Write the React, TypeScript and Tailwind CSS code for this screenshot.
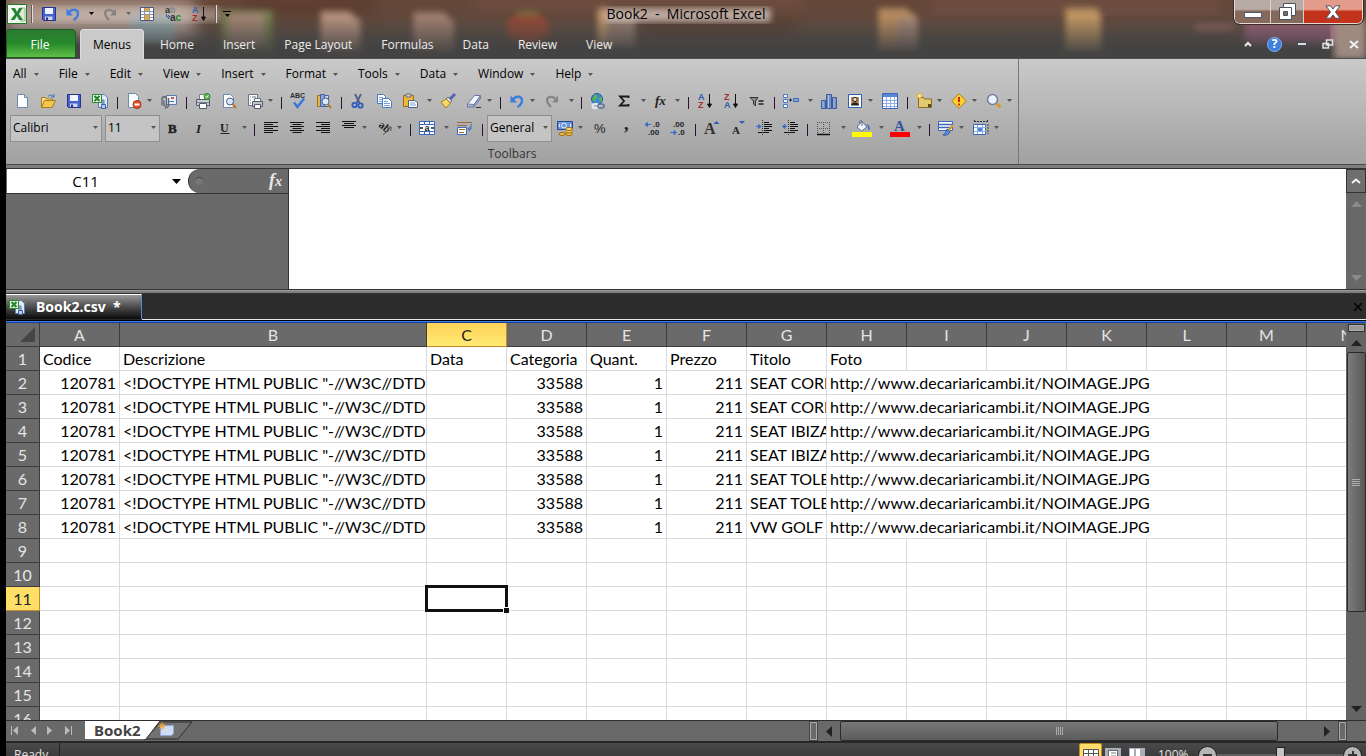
import type { ReactNode } from "react";

const paper = "#fdfeff";

const icons: Record<string, ReactNode> = {
  New: (
    <>
      <path d="M3.500 1.500h7l3 3v10h-10z" fill={paper} stroke="#6f86ad" />
      <path d="M10.500 1.500v3h3" fill="#cfdcf0" stroke="#6f86ad" />
    </>
  ),
  Open: (
    <>
      <path d="M1.500 14V4.500h4l1 1.500h6V8" fill="#fbe089" stroke="#a67c1c" />
      <path d="M1.500 14.500 4.500 7.500h11l-3.500 7z" fill="#f5c64c" stroke="#a67c1c" />
      <path d="M8 3.500c2-2 4-2 6 .5m0-3v3h-3" fill="none" stroke="#3b6fb8" />
    </>
  ),
  Save: (
    <>
      <path d="M1.500 1.500h13v13h-12l-1-1z" fill="#4560cf" stroke="#27358f" />
      <path d="M4 2h8v6H4z" fill="#f1f4ff" />
      <path d="M4 10.500h7.500V14H4z" fill="#cdd4ea" />
      <path d="M5 11.500h2V14H5z" fill="#27358f" />
    </>
  ),
  "Excel document": (
    <>
      <path d="M6.500 1.500h6l3 3v10h-9z" fill="#dfe9f8" stroke="#5b7ab0" />
      <path d="M9 8h4M9 10h4M11 6v6" stroke="#5b7ab0" />
      <path d="M.5 1.500h9v8h-9z" fill="#e7f5e2" stroke="#2f8a35" />
      <path d="m2.500 3 5 5m0-5-5 5" stroke="#23812c" strokeWidth="2" />
      <path d="M9.500 11.500h4v4h-4z" fill="#b5c9ea" stroke="#41609b" />
    </>
  ),
  Permission: (
    <>
      <path d="M2.500.5h7l3 3v11h-10z" fill={paper} stroke="#6f86ad" />
      <circle cx="11" cy="11.500" r="4" fill="#e2532b" stroke="#b0310f" />
      <path d="M8.500 11.500h5" stroke="#fff" strokeWidth="2" />
    </>
  ),
  Mail: (
    <>
      <path d="M5.500 2.500h10v9h-10z" fill="#e6eefb" stroke="#5b7ab0" />
      <path d="M10 5h3" stroke="#d8572d" strokeWidth="2" />
      <path d="M8 8.500h5" stroke="#5b7ab0" />
      <path d="M1 12.500V6a2 2 0 0 1 4.500 0v6.500a1.500 1.500 0 0 1-2.500 0V7.500M7.500 5v8q-1 2-3.500 2" fill="none" stroke="#5b6373" strokeWidth="1.300" />
    </>
  ),
  Print: (
    <>
      <path d="M4.500 1.500h7v5h-7z" fill={paper} stroke="#7a7f8c" />
      <path d="M1.500 6.500h13v6h-13z" fill="#c9cdd6" stroke="#555c6b" />
      <path d="M4.500 10.500h7v5h-7z" fill={paper} stroke="#555c6b" />
      <path d="M2 9.500h12" stroke="#787f8d" />
      <circle cx="12" cy="3.500" r="3" fill="#6cba59" stroke="#2c842c" />
      <path d="m10.500 3.500 1 1 2-2" fill="none" stroke="#fff" />
    </>
  ),
  Preview: (
    <>
      <path d="M2.500 1.500h7l3 3v10h-10z" fill={paper} stroke="#6f86ad" />
      <circle cx="9" cy="8.500" r="3.500" fill="#d4e6f7" stroke="#4b6285" />
      <path d="m11.500 11 3.500 4" stroke="#b87a2b" strokeWidth="2" />
    </>
  ),
  "Quick print": (
    <>
      <path d="M1.500 1.500h9v11h-9z" fill={paper} stroke="#6a7182" />
      <path d="M3 4h1M3 7h1M3 10h1M5 4h4" stroke="#6a7182" />
      <path d="M7.500 5.500h6v4h-6z" fill={paper} stroke="#6a7182" />
      <path d="M5.500 8.500h10v5h-10z" fill="#bfc4cf" stroke="#555c6b" />
      <path d="M7.500 11.500h6v4h-6z" fill={paper} stroke="#555c6b" />
    </>
  ),
  Spelling: (
    <>
      <text x="0" y="5" fontSize="7" fontFamily="Liberation Sans" fontWeight="700" fill="#2b2f3a">ABC</text>
      <path d="m4 9.500 3.500 4.500L14 5.500" fill="none" stroke="#3c78dc" strokeWidth="2.500" />
    </>
  ),
  Research: (
    <>
      <path d="M1.500 2.500h3v11h-3z" fill="#e3b449" stroke="#9a7320" />
      <path d="M4.500 1.500h4v12h-4z" fill="#8aa3d8" stroke="#45619f" />
      <path d="M8.500 2.500h4v11h-4z" fill="#c4d1ef" stroke="#45619f" />
      <circle cx="9.500" cy="8.500" r="3.500" fill="#dcebf9" stroke="#4b6285" />
      <path d="m12 11 3 4" stroke="#b87a2b" strokeWidth="2" />
    </>
  ),
  Cut: (
    <>
      <path d="M5 1 9.500 10M11 1 6.500 10" stroke="#4d5f82" strokeWidth="1.800" />
      <circle cx="4.500" cy="12" r="2.200" fill="none" stroke="#2c5bc0" strokeWidth="1.800" />
      <circle cx="10.500" cy="12.500" r="2.200" fill="none" stroke="#2c5bc0" strokeWidth="1.800" />
    </>
  ),
  Copy: (
    <>
      <path d="M1.500 1.500h6l2 2v7h-8z" fill={paper} stroke="#4a78c4" />
      <path d="M3 4.500h4M3 6.500h4M3 8.500h3" stroke="#7c9edb" />
      <path d="M6.500 5.500h6l3 3v6h-9z" fill={paper} stroke="#4a78c4" />
      <path d="M8 8.500h4M8 10.500h6M8 12.500h6" stroke="#7c9edb" />
    </>
  ),
  Paste: (
    <>
      <path d="M1.500 2.500h10v11h-10z" fill="#f0b738" stroke="#9b6b14" />
      <path d="M4 1h5v3H4z" fill="#c9cdd6" stroke="#6a6f7b" />
      <path d="M6.500 7.500h6l3 2v5h-9z" fill={paper} stroke="#4b6285" />
      <path d="M8 10h5M8 12h6" stroke="#7c9edb" />
    </>
  ),
  "Format painter": (
    <>
      <path d="m15 1-5 5" stroke="#5563b0" strokeWidth="3" />
      <path d="m8 4 4 4-2 2-4-4z" fill="#d5d9e4" stroke="#6a6f7b" />
      <path d="m6 6 4.500 4L6 15 1 9z" fill="#f7d765" stroke="#a97f1b" />
    </>
  ),
  Eraser: (
    <>
      <path d="m1.500 11 7-8.500h6l-6.500 9z" fill="#f4f7fd" stroke="#6478a3" />
      <path d="M1.500 11v3h6.500v-2.500L14.500 3v2.500L8 14" fill="#a7b7d9" stroke="#6478a3" />
      <path d="M10 14.500h5" stroke="#333" />
    </>
  ),
  Undo: (
    <>
      <path d="M4 6.500C7 2.500 13 3 13 7.500c0 3-2 5-4.500 6.500" fill="none" stroke="#3f7ce0" strokeWidth="2.400" />
      <path d="M1.500 2.500v7h6.500z" fill="#3f7ce0" />
    </>
  ),
  Redo: (
    <>
      <path d="M12 6.500C9 2.500 3 3 3 7.500c0 3 2 4 4 6.500" fill="none" stroke="#858585" strokeWidth="2.200" />
      <path d="M14 2.500v7H8z" fill="#858585" />
    </>
  ),
  Hyperlink: (
    <>
      <circle cx="7" cy="6" r="5.500" fill="#3f87dc" stroke="#24589d" />
      <path d="M4 2c3-1 4 1 3 3S4 7 5 9L2 7zM9 5l3-1v4l-2 1z" fill="#4fb848" />
      <rect x="2.500" y="11" width="6" height="4" rx="2" fill="none" stroke="#e3e9f3" strokeWidth="2" />
      <rect x="8" y="11" width="6" height="4" rx="2" fill="none" stroke="#5c7192" strokeWidth="1.500" />
    </>
  ),
  Sum: <path d="M12.500 5V3.500H4l4 4.500-4 4.500h8.500V11" fill="none" stroke="#1b1b1b" strokeWidth="1.800" />,
  Function: <text x="1" y="12" fontSize="13" fontStyle="italic" fontWeight="700" fontFamily="Liberation Serif" fill="#222">fx</text>,
  "Sort ascending": (
    <>
      <text x="1" y="7" fontSize="9" fontWeight="700" fontFamily="Liberation Sans" fill="#2d5cae">A</text>
      <text x="1" y="15" fontSize="9" fontWeight="700" fontFamily="Liberation Sans" fill="#a92e2e">Z</text>
      <path d="M12.500 1v12M10.500 11l2 3.500 2-3.500z" stroke="#111" fill="#111" />
    </>
  ),
  "Sort descending": (
    <>
      <text x="1" y="7" fontSize="9" fontWeight="700" fontFamily="Liberation Sans" fill="#a92e2e">Z</text>
      <text x="1" y="15" fontSize="9" fontWeight="700" fontFamily="Liberation Sans" fill="#2d5cae">A</text>
      <path d="M12.500 1v12M10.500 11l2 3.500 2-3.500z" stroke="#111" fill="#111" />
    </>
  ),
  Filter: (
    <>
      <path d="M1 4.500h8L6.500 8v5L4.500 11V8z" fill="#888" stroke="#333" />
      <path d="M9.500 8h5M9.500 11h5" stroke="#222" strokeWidth="1.600" />
    </>
  ),
  Outline: (
    <>
      <path d="M.5 1.500h4v3h-4zM.5 6.500h4v3h-4zM.5 11.500h4v3h-4z" fill="#f2f6fe" stroke="#4a78c4" />
      <path d="M10.500 5.500h5v3h-5z" fill="#84a8e6" stroke="#3a64b1" />
      <path d="M6 7h3M7.500 5.500v3" stroke="#222" />
    </>
  ),
  Chart: (
    <>
      <path d="M.5 7.500h4v8h-4zM5.500 1.500h5v14h-5zM11.500 4.500h4v11h-4z" fill="#7390c6" stroke="#3c5b97" />
      <path d="M2 8v7M7.500 2v13M13 5v10" stroke="#a9bfe6" />
    </>
  ),
  Picture: (
    <>
      <path d="M1.500 1.500h13v13h-13z" fill={paper} stroke="#2b5fb4" />
      <path d="M4 4h8v8H4z" fill="#b98c58" />
      <circle cx="8" cy="6.500" r="2.200" fill="#f3d3b3" stroke="#222" />
      <path d="M4 12.500c0-4 8-4 8 0z" fill="#222" />
    </>
  ),
  Table: (
    <>
      <path d="M.5.5h15v15H.5z" fill={paper} stroke="#3a67bd" />
      <path d="M1 1h14v3H1z" fill="#5a86d8" />
      <path d="M1 7.500h14M1 10.500h14M1 13.500h14M4.500 4v11M8.500 4v11M12.500 4v11" stroke="#92aede" />
    </>
  ),
  "New folder": (
    <>
      <path d="M2.500 4.500h5l1 1.500h7v8.500h-13z" fill="#e2c972" stroke="#8b6d1e" />
      <path d="M12 11h3v3h-3z" fill="#5d4a1a" />
      <path d="M3.500-1v8M-.5 3h8M.5 0l6 6m0-6-6 6" stroke="#f9b324" />
      <circle cx="3.500" cy="3" r="1.500" fill="#fff6bd" />
    </>
  ),
  Warning: (
    <>
      <path d="M8 .7 15.300 8 8 15.300.7 8z" fill="#fcd32f" stroke="#b77a12" />
      <path d="M8 4v5M8 10.500v2" stroke="#d0271b" strokeWidth="2" />
    </>
  ),
  Zoom: (
    <>
      <circle cx="6.500" cy="6.500" r="5" fill="#eaf3fc" stroke="#6e7f9b" strokeWidth="1.500" />
      <path d="m10.500 10.500 4 4" stroke="#d49b32" strokeWidth="3" />
    </>
  ),
  Bold: <text x="3" y="12.500" fontSize="13" fontWeight="700" fontFamily="Liberation Serif" fill="#222" stroke="#222" strokeWidth=".5">B</text>,
  Italic: <text x="5" y="12.500" fontSize="13" fontStyle="italic" fontWeight="700" fontFamily="Liberation Serif" fill="#222">I</text>,
  Underline: (
    <>
      <text x="3" y="11.500" fontSize="12" fontWeight="700" fontFamily="Liberation Serif" fill="#222">U</text>
      <path d="M3.500 13.500h9" stroke="#222" />
    </>
  ),
  "Align left": <path d="M1 2.500h14M1 4.500h9M1 6.500h14M1 8.500h9M1 10.500h14M1 12.500h9" stroke="#111" />,
  "Align center": <path d="M1 2.500h14M3.500 4.500h9M1 6.500h14M3.500 8.500h9M1 10.500h14M3.500 12.500h9" stroke="#111" />,
  "Align right": <path d="M1 2.500h14M6 4.500h9M1 6.500h14M6 8.500h9M1 10.500h14M6 12.500h9" stroke="#111" />,
  "Align top": <path d="M1 1.500h14M3 3.500h10M1 5.500h14M3 7.500h10" stroke="#111" />,
  Orientation: (
    <>
      <text x="2" y="6" fontSize="11" fontWeight="700" fontFamily="Liberation Serif" transform="rotate(40 2 6)" fill="#222">ab</text>
      <path d="m7 15 8-8m0 4V7h-4" fill="none" stroke="#555" />
    </>
  ),
  Merge: (
    <>
      <path d="M.5 1.500h15v13H.5z" fill={paper} stroke="#3a67bd" />
      <path d="M5.500 1.500v3m5-3v3m-5 7v3m5-3v3M.5 4.500h15M.5 11.500h15" stroke="#3a67bd" />
      <text x="5.500" y="10.500" fontSize="9" fontWeight="700" fontFamily="Liberation Sans" fill="#222">a</text>
      <path d="M1 8h3M12 8h3" stroke="#222" strokeWidth="1.500" />
    </>
  ),
  Wrap: (
    <>
      <path d="M0 2.500h15M0 5.500h10" stroke="#9b6a3c" />
      <path d="M14 4v5h-3m2-2-2 2 2 2" fill="none" stroke="#3a67bd" />
      <path d="M.5 7.500h9v7h-9z" fill={paper} stroke="#3a67bd" />
      <path d="M2 9.500h6M2 12.500h5" stroke="#9b6a3c" />
    </>
  ),
  Currency: (
    <>
      <path d="M.5 1.500h15v8H.5z" fill="#6a93dc" stroke="#23498f" />
      <circle cx="7" cy="5.500" r="2.500" fill="none" stroke="#e8effc" />
      <path d="M2.500 4v3M13.500 4v3" stroke="#e8effc" />
      <ellipse cx="12" cy="14" rx="3.500" ry="1.500" fill="#f5c742" stroke="#9a6d15" />
      <ellipse cx="12" cy="11.500" rx="3.500" ry="1.500" fill="#f5c742" stroke="#9a6d15" />
      <ellipse cx="12" cy="9" rx="3.500" ry="1.500" fill="#f9dc79" stroke="#9a6d15" />
      <ellipse cx="5" cy="14" rx="3" ry="1.500" fill="#f5c742" stroke="#9a6d15" />
    </>
  ),
  Percent: <text x="2" y="13" fontSize="13" fontFamily="Liberation Sans" fill="#222">%</text>,
  Comma: <text x="6" y="10" fontSize="18" fontWeight="700" fontFamily="Liberation Serif" fill="#222">,</text>,
  "Increase decimal": (
    <>
      <path d="M1 4.500 3.500 2.500v4zM2 4.500h5" fill="#3a6bd0" stroke="#3a6bd0" />
      <text x="9" y="7" fontSize="8" fontWeight="700" fontFamily="Liberation Sans" fill="#222">.0</text>
      <text x="4" y="15" fontSize="8" fontWeight="700" fontFamily="Liberation Sans" fill="#222">.00</text>
    </>
  ),
  "Decrease decimal": (
    <>
      <text x="3" y="7" fontSize="8" fontWeight="700" fontFamily="Liberation Sans" fill="#222">.00</text>
      <text x="8" y="15" fontSize="8" fontWeight="700" fontFamily="Liberation Sans" fill="#222">.0</text>
      <path d="M6.500 12.500 4 10.500v4zM0 12.500h5" fill="#3a6bd0" stroke="#3a6bd0" />
    </>
  ),
  "Grow font": (
    <>
      <text x="0" y="14" fontSize="16" fontWeight="700" fontFamily="Liberation Serif" fill="#333">A</text>
      <path d="m9.500 4 3-3 3 3z" fill="#2c5bc0" />
    </>
  ),
  "Shrink font": (
    <>
      <text x="2" y="14" fontSize="11" fontWeight="700" fontFamily="Liberation Serif" fill="#222">A</text>
      <path d="m9 1 3 3 3-3z" fill="#2c5bc0" />
    </>
  ),
  Indent: (
    <>
      <path d="M8 2.500h5M8 4.500h8M8 6.500h8M8 8.500h5M8 10.500h8M2 12.500h11" stroke="#111" strokeWidth="1.200" />
      <path d="M0 6.500h3M2.500 4.500 5 6.500 2.500 8.500z" fill="#3a6bd0" stroke="#3a6bd0" />
      <path d="M6.500 0v16" stroke="#333" strokeDasharray="1 1" />
    </>
  ),
  Outdent: (
    <>
      <path d="M8 2.500h5M8 4.500h8M8 6.500h8M8 8.500h5M8 10.500h8M2 12.500h11" stroke="#111" strokeWidth="1.200" />
      <path d="M2 6.500h3M3 4.500.5 6.500 3 8.500z" fill="#3a6bd0" stroke="#3a6bd0" />
      <path d="M6.500 0v16" stroke="#333" strokeDasharray="1 1" />
    </>
  ),
  Borders: (
    <>
      <path d="M1.500 2v12M7.500 2v12M13.500 2v12M1 2.500h13M1 8.500h13" stroke="#555" strokeDasharray="1 1" />
      <path d="M1 14.500h13" stroke="#111" strokeWidth="1.500" />
    </>
  ),
  "Fill color": (
    <>
      <path d="M3 7 8 1.500 13 7l-5.500 4z" fill="#eef3fb" stroke="#5c7192" />
      <path d="M8 6V1q-2-2-3 2" fill="none" stroke="#5c7192" />
      <path d="M12 4q5 1 3.500 6-2 0-1.500-3z" fill="#3f72cf" />
      <path d="M-2 12h20v5H-2z" fill="#fffb00" />
    </>
  ),
  "Font color": (
    <>
      <text x="2" y="10.500" fontSize="15" fontWeight="700" fontFamily="Liberation Serif" fill="#34589b">A</text>
      <path d="M-2 12h20v5H-2z" fill="#fb0000" />
    </>
  ),
  "Cell styles": (
    <>
      <path d="M.5 1.500h14v9H.5z" fill={paper} stroke="#3a67bd" />
      <path d="M1 4.500h13M1 7.500h13" stroke="#3a67bd" strokeWidth="1.500" />
      <path d="m15 5-5 6" stroke="#d79a32" strokeWidth="2.500" />
      <path d="m9 9 3 3q-2 4-7 3 3-1 4-6z" fill="#5e8ee0" stroke="#2c5bb0" />
    </>
  ),
  "Format cells": (
    <>
      <path d="M1 1.500h14M1.500 0v3M14.500 0v3" stroke="#333" strokeDasharray="2 1" />
      <path d="M.5 4.500h12v10H.5z" fill={paper} stroke="#3a67bd" />
      <path d="M5 7h4v4H5z" fill="#4c82e0" />
      <path d="M1 7.500h12M1 11.500h12M4.500 5v9M9.500 5v9" stroke="#92aede" />
      <path d="M15 4v10" stroke="#333" strokeDasharray="2 1" />
    </>
  ),
  Cells: (
    <>
      <path d="M1.500 1.500h13v13h-13z" fill={paper} stroke="#4a5a80" />
      <path d="M5.500 2v12M10.500 2v12M2 5.500h12M2 8.500h12M2 11.500h12" stroke="#8b96b0" />
      <path d="M6 2h4v3H6zM6 9h4v5H6z" fill="#e8a93a" />
    </>
  ),
  Replace: (
    <>
      <text x="0" y="6.500" fontSize="9" fontWeight="700" fontFamily="Liberation Sans" fill="#333">a<tspan fill="#888">b</tspan></text>
      <text x="5" y="15" fontSize="10" fontWeight="700" fontFamily="Liberation Sans" fill="#333">a<tspan fill="#23872d">c</tspan></text>
      <path d="M1.500 8v3H5M3 9l2 2-2 2" fill="none" stroke="#2d5cae" />
    </>
  ),
};

function Icon({ name }: { name: string }) {
  return (
    <svg viewBox="0 0 16 16" className="size-4 shrink-0 overflow-visible" aria-hidden="true">
      {icons[name]}
    </svg>
  );
}

function Arrow({ className = "text-[#555]" }: { className?: string }) {
  return (
    <svg viewBox="0 0 5 3" className={`w-[5px] h-[3px] shrink-0 ${className}`} aria-hidden="true">
      <path d="M0 0h5L2.500 3z" fill="currentColor" />
    </svg>
  );
}

// "|" is a separator, a trailing "+" or "++" marks a narrow or wide drop-down arrow
const rowOne = [
  "New", "Open", "Save", "Excel document", "|", "Permission+", "Mail", "|", "Print", "Preview", "Quick print+", "|",
  "Spelling", "Research", "|", "Cut", "Copy", "Paste++", "Format painter", "Eraser+", "|", "Undo+", "Redo++", "|",
  "Hyperlink", "Sum++", "Function+", "|", "Sort ascending", "Sort descending", "Filter", "|", "Outline++", "Chart",
  "Picture+", "Table", "|", "New folder+", "Warning+", "Zoom+",
];
const rowTwoLeft = [
  "Bold", "Italic", "Underline++", "|", "Align left", "Align center", "Align right", "Align top+", "Orientation+", "|",
  "Merge++", "Wrap", "|",
];
const rowTwoRight = [
  "Currency+", "Percent", "Comma", "Increase decimal", "Decrease decimal", "|", "Grow font", "Shrink font", "Indent",
  "Outdent", "|", "Borders++", "Fill color++", "Font color++", "|", "Cell styles+", "Format cells+",
];

function Tools({ items }: { items: string[] }) {
  return (
    <>
      {items.map((item, i) => {
        if (item === "|") {
          return (
            <span key={i} className="w-2 shrink-0 flex justify-center">
              <span className="w-px h-3 mt-1 bg-[#2c1033]" />
            </span>
          );
        }
        const name = item.replace(/\+/g, "");
        const wide = item.endsWith("++");
        return (
          <button key={i} type="button" aria-label={name} className="flex items-center shrink-0 h-[26px]">
            <span className="w-[26px] flex justify-center">
              <Icon name={name} />
            </span>
            {item.endsWith("+") && (
              <span className={wide ? "w-3 flex justify-center" : "w-[9px] flex"}>
                <Arrow />
              </span>
            )}
          </button>
        );
      })}
    </>
  );
}

function Combo({ label, value, className }: { label: string; value: string; className: string }) {
  return (
    <span className={`relative shrink-0 h-[27px] ${className}`}>
      <select
        aria-label={label}
        defaultValue={value}
        className="appearance-none size-full pl-[2px] pb-px border border-[#8f8f8f] bg-[#c4c4c4] text-xs text-black rounded-none"
      >
        <option>{value}</option>
      </select>
      <Arrow className="absolute right-1 top-3 text-[#555]" />
    </span>
  );
}

function Wallpaper() {
  return (
    <svg className="absolute inset-0 size-full" preserveAspectRatio="none" viewBox="0 0 1366 59" aria-hidden="true">
      <defs>
        <linearGradient id="wood" x1="0" x2="0" y1="0" y2="1">
          <stop offset="0" stopColor="#664637" />
          <stop offset=".5" stopColor="#5d4a3f" />
          <stop offset=".85" stopColor="#454240" />
        </linearGradient>
        <linearGradient id="shade" x1="0" x2="0" y1="0" y2="1">
          <stop offset=".3" stopColor="#444" stopOpacity="0" />
          <stop offset=".9" stopColor="#434343" stopOpacity=".95" />
        </linearGradient>
        <filter id="soft"><feGaussianBlur stdDeviation="3" /></filter>
        <filter id="glow"><feGaussianBlur stdDeviation="8" /></filter>
      </defs>
      <rect width="1366" height="59" fill="url(#wood)" />
      <path d="M0 0h190v40H0z" fill="#b09a90" filter="url(#glow)" />
      <path d="M240 0h130v14H240zM640 20h150v16H640z" fill="#4d2f22" opacity=".5" filter="url(#glow)" />
      <path d="M470-4h330v12H470zM930 0h290v14H930z" fill="#86655a" opacity=".4" filter="url(#glow)" />
      <g filter="url(#soft)" opacity=".88">
        <path d="M125 14h45v30h-45z" fill="#8fa5ab" />
        <path d="M216 10h52v46h-52z" fill="#75814f" />
        <path d="M223 13h36v34h-36z" fill="#a68a78" />
        <path d="M316 11h28l12 10v34h-40z" fill="#bd9786" />
        <path d="M409 12h30l11 10v33h-41z" fill="#a58475" />
        <ellipse cx="524" cy="28" rx="22" ry="16" fill="#964a36" />
        <path d="M514 13h20" stroke="#7c763d" strokeWidth="4" />
        <path d="M594 8h10v40h-10z" fill="#c79d72" />
        <path d="M604 14h28v34h-28z" fill="#9c8376" />
        <path d="M876 8h28l12 10v34h-40z" fill="#bd9162" />
        <path d="M895 18h21v32h-21z" fill="#a98c7c" />
        <path d="M1064 8h32l4 8v38h-36z" fill="#c79b65" />
        <path d="M1194 24h40v7h-40z" fill="#8d6560" />
        <path d="M1244 20h90v24h-90z" fill="#a1647e" />
        <path d="M1334 20h32v39h-32z" fill="#a8948a" />
      </g>
      <rect width="1330" height="59" fill="url(#shade)" />
      <path d="M602 8h166v14H602z" fill="#d9c8c0" opacity=".75" filter="url(#soft)" />
      <path d="M40 7h175v15H40z" fill="#d2c4bd" opacity=".45" filter="url(#soft)" />
    </svg>
  );
}

function TitleBar() {
  return (
    <div className="relative h-[29px] flex items-start justify-between">
      <div className="flex items-center h-[27px]">
        <svg viewBox="0 0 20 20" className="size-5 ml-px" aria-label="Excel">
          <path d="M.5.5h19v19H.5z" fill="#f1f7ee" stroke="#1f7a2c" />
          <path d="M13 4h5v13h-5" fill="#dcebd8" stroke="#8dba89" />
          <path d="M4 4h4l2 4 2-4h3.500L12 10l4 6h-4l-2-4-2.500 4H3.500L8 10z" fill="#23852f" />
        </svg>
        <span className="w-px h-[18px] ml-1 bg-[#e4dcd8] border-l border-[#6b5c56] box-content" />
        <button type="button" aria-label="Save file" className="ml-2"><Icon name="Save" /></button>
        <button type="button" aria-label="Undo last" className="ml-2 flex items-center gap-2">
          <Icon name="Undo" />
          <Arrow className="text-black" />
        </button>
        <button type="button" aria-label="Redo last" className="ml-2 flex items-center gap-2">
          <Icon name="Redo" />
          <Arrow className="text-[#666]" />
        </button>
        <button type="button" aria-label="Cells" className="ml-2"><Icon name="Cells" /></button>
        <button type="button" aria-label="Replace" className="ml-[10px]"><Icon name="Replace" /></button>
        <button type="button" aria-label="Sort" className="ml-[10px]"><Icon name="Sort ascending" /></button>
        <span className="w-px h-[18px] ml-2 bg-[#e4dcd8] border-l border-[#6b5c56] box-content" />
        <button type="button" aria-label="Customize toolbar" className="ml-[6px] flex flex-col items-center gap-[2px]">
          <span className="w-2 h-px bg-black" />
          <Arrow className="text-black" />
        </button>
      </div>
      <h1 className="absolute left-1/2 -translate-x-1/2 top-1 h-5 leading-5 text-sm text-black whitespace-pre">Book2  -  Microsoft Excel</h1>
      <div className="flex h-6 mr-[3px] rounded-b-md border border-t-0 border-[#e5d9d4] overflow-hidden outline outline-[#3b2c28]">
        <button type="button" aria-label="Minimize" className="w-9 flex justify-center items-end pb-[5px] bg-linear-to-b from-[#b8aaa4] from-40% to-[#85695b] to-50% border-r border-[#ddd0ca]">
          <span className="w-4 h-1 bg-white border border-[#555a68] box-content" />
        </button>
        <button type="button" aria-label="Restore" className="w-[33px] flex justify-center items-center bg-linear-to-b from-[#b8aaa4] from-40% to-[#85695b] to-50% border-r border-[#ddd0ca]">
          <svg viewBox="0 0 18 17" className="w-[18px] h-[17px]" aria-hidden="true">
            <path d="M5.500.5h12v12h-12z" fill="#fff" stroke="#4c5161" />
            <path d="M1.500 4.500h12v12h-12z" fill="#fff" stroke="#4c5161" />
            <path d="M5.500 8.500h4v4h-4z" fill="#85695b" stroke="#4c5161" />
          </svg>
        </button>
        <button type="button" aria-label="Close" className="w-[58px] flex justify-center items-center bg-linear-to-b from-[#e39c8b] from-40% to-[#c3321a] to-50%">
          <svg viewBox="0 0 16 14" className="w-4 h-[14px]" aria-hidden="true">
            <path d="M1 .8h4.500L8 4l2.500-3.200H15L10.500 7l4.500 6.200h-4.500L8 10l-2.500 3.200H1L5.500 7z" fill="#fff" stroke="#4c5161" />
          </svg>
        </button>
      </div>
    </div>
  );
}

const tabs = ["Home", "Insert", "Page Layout", "Formulas", "Data", "Review", "View"];
const menus = ["All", "File", "Edit", "View", "Insert", "Format", "Tools", "Data", "Window", "Help"];

function RibbonTabs() {
  return (
    <nav className="relative h-[30px] flex items-end border-b border-[#50504f] text-xs text-[#ececec]">
      <button type="button" className="w-[70px] h-[29px] pr-[2px] pt-[2px] rounded-t-sm border border-[#1b5f1e] bg-linear-to-b from-[#2c7a30] via-[#258a2b] to-[#5fbf49] text-white">
        File
      </button>
      <button type="button" className="w-16 h-[30px] -mb-px ml-1 rounded-t-sm border border-b-0 border-[#dedede] bg-[#cacaca] text-black">
        Menus
      </button>
      <div className="flex ml-[2px] gap-px">
        {tabs.map((tab) => (
          <button key={tab} type="button" className="h-7 px-[14px] pt-[2px]">
            {tab}
          </button>
        ))}
      </div>
      <div className="ml-auto flex items-center h-7 gap-[15px] mr-[7px]">
        <button type="button" aria-label="Collapse ribbon">
          <svg viewBox="0 0 8 6" className="w-2 h-[6px]"><path d="m1 5 3-3 3 3" fill="none" stroke="#eee" strokeWidth="2" /></svg>
        </button>
        <button type="button" aria-label="Help" className="size-[15px] rounded-full bg-[#3f7fdb] border border-[#7fb0f5] text-white text-xs leading-3 font-bold">?</button>
        <button type="button" aria-label="Minimize workbook" className="w-[10px] h-1 bg-[#ddd] border border-[#444b55]" />
        <button type="button" aria-label="Restore workbook">
          <svg viewBox="0 0 12 10" className="w-3 h-[10px]">
            <path d="M4.500 1h6v5h-6zM1 4.500h5.500V9H1z" fill="#555" stroke="#e4e4e4" strokeWidth="1.500" />
          </svg>
        </button>
        <button type="button" aria-label="Close workbook">
          <svg viewBox="0 0 10 9" className="w-[10px] h-[9px]"><path d="m1 1 8 7M9 1 1 8" stroke="#f0f0f0" strokeWidth="2" /></svg>
        </button>
      </div>
    </nav>
  );
}

function Ribbon() {
  return (
    <div className="h-[106px] bg-linear-to-b from-[#cacaca] to-[#a1a1a1] border-b border-[#4c4c4c] flex">
      <div className="w-[1013px] shrink-0 border-r border-[#777] flex flex-col">
        <div className="flex h-7 items-center pl-[7px] pt-[2px]">
          {menus.map((menu) => (
            <button key={menu} type="button" className="flex items-center text-xs text-black pr-5 gap-[7px]">
              {menu}
              <Arrow />
            </button>
          ))}
        </div>
        <div className="flex h-[27px] items-center pl-[3px]">
          <Tools items={rowOne} />
        </div>
        <div className="flex h-[27px] items-center pl-1">
          <Combo label="Font" value="Calibri" className="w-[92px] mr-[3px]" />
          <Combo label="Font size" value="11" className="w-[55px]" />
          <Tools items={rowTwoLeft} />
          <Combo label="Number format" value="General" className="w-[65px] ml-px" />
          <Tools items={rowTwoRight} />
        </div>
        <div className="h-[23px] pt-px text-center text-xs leading-6 text-[#333]">Toolbars</div>
      </div>
    </div>
  );
}

function FormulaBar() {
  return (
    <div className="h-[129px] pt-[3px] bg-[#7d7d7d] flex flex-col">
      <div className="flex-1 flex border-y border-[#333]">
        <div className="w-[283px] bg-[#6a6a6a] border-r border-[#333]">
          <div className="h-[25px] flex border-b border-[#333]">
            <div className="relative w-[182px] pl-px">
              <input aria-label="Name box" defaultValue="C11" className="size-full bg-white pr-6 text-center text-[15px] text-black" />
              <svg viewBox="0 0 9 5" className="absolute right-[7px] top-[10px] w-[9px] h-[5px]"><path d="M0 0h9L4.500 5z" /></svg>
            </div>
            <div className="flex-1 flex items-center justify-between bg-white">
              <div className="size-full flex items-center justify-between rounded-l-full bg-[#6a6a6a] border-l border-[#333] pl-[6px] pr-[6px]">
                <span className="size-2 rounded-full bg-[#777] border-t border-[#444]" />
                <button type="button" aria-label="Insert function" className="font-['Liberation_Serif',serif] italic font-bold text-lg leading-5 text-[#e8e8e8]">
                  f<span className="text-sm">x</span>
                </button>
              </div>
            </div>
          </div>
        </div>
        <textarea aria-label="Formula" className="flex-1 bg-white resize-none block p-1" />
        <div className="w-5 bg-[#686868] flex flex-col items-center">
          <button type="button" aria-label="Collapse formula bar" className="w-5 h-6 flex items-center justify-center border border-[#333] bg-[#6f6f6f]">
            <svg viewBox="0 0 10 6" className="w-[10px] h-[6px]"><path d="m1 5 4-3.500L9 5" fill="none" stroke="#f4f4f4" strokeWidth="2" /></svg>
          </button>
          <svg viewBox="0 0 11 6" className="w-[11px] h-[6px] mt-2"><path d="M5.500 0 11 6H0z" fill="#8a8a8a" /></svg>
          <svg viewBox="0 0 11 6" className="w-[11px] h-[6px] mt-auto mb-2"><path d="M0 0h11L5.500 6z" fill="#8a8a8a" /></svg>
        </div>
      </div>
      <div className="h-1 border-t border-[#9a9a9a] border-b border-b-[#333]" />
    </div>
  );
}

function WorkbookTab() {
  return (
    <div className="bg-[#2c2c2c]">
      <div className="h-[25px] flex items-stretch">
        <button type="button" className="w-[136px] flex items-center pl-[3px] border-t border-r border-t-white border-r-[#4f8de8] bg-linear-to-b from-[#999] to-[#0c0c0c] text-sm font-bold text-white font-['Noto_Sans',sans-serif] whitespace-pre">
          <Icon name="Excel document" />
          <span className="ml-[11px]">Book2.csv  *</span>
        </button>
        <button type="button" aria-label="Close tab" className="ml-auto mr-1">
          <svg viewBox="0 0 8 8" className="size-2"><path d="m0 0 8 8M8 0 0 8" stroke="#000" strokeWidth="1.500" /></svg>
        </button>
      </div>
      <div className="h-px ml-[136px] bg-[#e8e8e8]" />
      <div className="h-[3px] border-t border-black border-b border-b-[#12409e] bg-[#3c7be8]" />
    </div>
  );
}

const columns = ["A", "B", "C", "D", "E", "F", "G", "H", "I", "J", "K", "L", "M", "N"];
const headings = ["Codice", "Descrizione", "Data", "Categoria", "Quant.", "Prezzo", "Titolo", "Foto"];
const titles = ["SEAT CORD", "SEAT CORD", "SEAT IBIZA", "SEAT IBIZA", "SEAT TOLE", "SEAT TOLE", "VW GOLF I"];

function Cell({ children, right, span }: { children?: ReactNode; right?: boolean; span?: number }) {
  return (
    <td
      colSpan={span}
      className={`h-6 p-0 pl-[3px] border-r border-b border-[#d9dadb] overflow-hidden whitespace-nowrap ${right ? "pr-[3px] text-right" : ""}`}
    >
      {children}
    </td>
  );
}

function RowCells({ row }: { row: number }) {
  if (row === 1) {
    return columns.map((col, i) => <Cell key={col}>{headings[i]}</Cell>);
  }
  if (row <= 8) {
    return (
      <>
        <Cell right>120781</Cell>
        <Cell>{'<!DOCTYPE HTML PUBLIC "-//W3C//DTD'}</Cell>
        <Cell />
        <Cell right>33588</Cell>
        <Cell right>1</Cell>
        <Cell right>211</Cell>
        <Cell>{titles[row - 2]}</Cell>
        <Cell span={5}>
          <span className="[font-kerning:none] [font-variant-ligatures:none]">http://www.decariaricambi.it/NOIMAGE.JPG</span>
        </Cell>
        <Cell />
        <Cell />
      </>
    );
  }
  return columns.map((col) =>
    row === 11 && col === "C" ? (
      <td key={col} className="relative h-6 p-0 border-r border-b border-[#d9dadb]">
        <span className="absolute -inset-[2px] border-[3px] border-[#111]" />
        <span className="absolute -right-[3px] -bottom-[3px] size-[6px] bg-[#111] border-t border-l border-white" />
      </td>
    ) : (
      <Cell key={col} />
    ),
  );
}

function Sheet() {
  return (
    <div className="flex-1 min-h-0 flex">
      <div className="flex-1 min-w-0 overflow-hidden bg-white">
        <table className="table-fixed border-separate border-spacing-0 w-[1381px] font-['Lato',sans-serif] text-base leading-5 text-black">
          <colgroup>
            <col className="w-[34px]" />
            {columns.map((col) => (
              <col key={col} className={col === "B" ? "w-[307px]" : "w-20"} />
            ))}
          </colgroup>
          <thead>
            <tr>
              <th className="h-6 p-0 bg-[#6a6a6a] border-r border-b border-[#3c3c3c]">
                <svg viewBox="0 0 15 15" className="size-[15px] ml-auto mr-1" aria-label="Select all"><path d="M15 0v15H0z" fill="#454545" /></svg>
              </th>
              {columns.map((col) => (
                <th
                  key={col}
                  className={
                    col === "C"
                      ? "h-6 p-0 font-normal text-[#222] bg-linear-to-b from-[#ffd158] to-[#ffeb74] border-r border-b border-[#c48a2c]"
                      : "h-6 p-0 font-normal text-[#e4e4e4] bg-[#6a6a6a] border-r border-b border-[#3c3c3c]"
                  }
                >
                  {col}
                </th>
              ))}
            </tr>
          </thead>
          <tbody>
            {Array.from({ length: 16 }, (_, i) => i + 1).map((row) => (
              <tr key={row}>
                <th
                  className={
                    row === 11
                      ? "h-6 p-0 font-normal text-[#222] bg-[#ffdf68] border-r border-b border-[#c48a2c]"
                      : "h-6 p-0 font-normal text-[#e4e4e4] bg-[#6a6a6a] border-r border-b border-[#3c3c3c]"
                  }
                >
                  {row}
                </th>
                <RowCells row={row} />
              </tr>
            ))}
          </tbody>
        </table>
      </div>
      <div className="w-5 bg-[#646464] flex flex-col items-center">
        <span className="w-[17px] h-2 mt-px border border-[#333] bg-[#999] outline-1 outline-[#aaa] -outline-offset-2" />
        <svg viewBox="0 0 11 6" className="w-[11px] h-[6px] mt-2"><path d="M5.500 0 11 6H0z" fill="#222" /></svg>
        <div className="w-[19px] h-[260px] mt-[6px] rounded-xs border border-[#2b2b2b] bg-linear-to-r from-[#7c7c7c] to-[#585858] flex flex-col items-center justify-center gap-px">
          <span className="w-2 h-px bg-[#aaa]" />
          <span className="w-2 h-px bg-[#aaa]" />
          <span className="w-2 h-px bg-[#aaa]" />
          <span className="w-2 h-px bg-[#aaa]" />
        </div>
        <svg viewBox="0 0 11 6" className="w-[11px] h-[6px] mt-auto mb-2"><path d="M0 0h11L5.500 6z" fill="#222" /></svg>
      </div>
    </div>
  );
}

function SheetTabs() {
  return (
    <div className="h-[21px] shrink-0 flex items-center bg-[#696969] border-t border-[#2e2e2e]">
      <div className="w-[79px] flex items-center justify-around pr-2 pb-[2px]">
        {["First", "Previous", "Next", "Last"].map((label, i) => (
          <button key={label} type="button" aria-label={label}>
            <svg viewBox="0 0 8 9" className="w-2 h-[9px]">
              <path d={i < 2 ? "M7 0v9L2 4.500z" : "M1 0v9l5-4.500z"} fill="#bbb" />
              {i === 0 && <path d="M.5 0v9" stroke="#bbb" />}
              {i === 3 && <path d="M7.500 0v9" stroke="#bbb" />}
            </svg>
          </button>
        ))}
      </div>
      <div className="relative h-5 w-[110px] flex">
        <svg viewBox="0 0 110 20" className="absolute inset-0 size-full" aria-hidden="true">
          <path d="M60 19 75 1h32L93 18H60z" fill="#717171" stroke="#2c2c2c" />
          <path d="M0 0h75L61 18H0z" fill="#fff" />
          <path d="M75 0 61 18" stroke="#333" />
          <path d="M75.500 4.500h13v8l-2 2h-11z" fill="#cfdcf2" stroke="#8ea6d2" />
          <path d="M77 1v8M73 5h8M74.500 2.500l5 5m0-5-5 5" stroke="#f3a32b" />
        </svg>
        <button type="button" className="relative pl-[9px] h-[18px] text-[15px] leading-[18px] font-bold text-[#444] font-['Noto_Sans',sans-serif]">Book2</button>
      </div>
      <div className="ml-auto w-[536px] h-full flex items-center">
        <span className="w-[7px] h-[18px] border border-[#aaa] outline outline-[#444]" />
        <svg viewBox="0 0 6 11" className="w-[6px] h-[11px] ml-[9px]"><path d="M6 0v11L0 5.500z" fill="#222" /></svg>
        <div className="w-[438px] h-5 ml-2 rounded-xs border border-[#2b2b2b] bg-linear-to-b from-[#777] to-[#5c5c5c] flex items-center justify-center gap-px">
          <span className="w-px h-2 bg-[#aaa]" />
          <span className="w-px h-2 bg-[#aaa]" />
          <span className="w-px h-2 bg-[#aaa]" />
          <span className="w-px h-2 bg-[#aaa]" />
        </div>
        <svg viewBox="0 0 6 11" className="w-[6px] h-[11px] ml-auto mr-[9px]"><path d="M0 0v11l6-5.500z" fill="#222" /></svg>
        <span className="w-[7px] h-[18px] border border-[#aaa] outline outline-[#444]" />
      </div>
      <div className="w-5" />
    </div>
  );
}

function StatusBar() {
  return (
    <footer className="h-[15px] shrink-0 overflow-hidden border-t-2 border-[#272727]">
      <div className="h-6 flex items-center bg-linear-to-b from-[#4a4a4a] to-[#2f2f2f] text-xs text-[#e2e2e2]">
        <span className="w-[54px] pl-2 h-6 leading-6 border-r border-[#222]">Ready</span>
        <div className="ml-auto flex items-center h-6">
          <button type="button" aria-label="Normal view" className="w-[23px] h-6 flex items-center justify-center bg-[#ffdc6b] border border-[#c98a22] rounded-xs">
            <svg viewBox="0 0 16 12" className="w-4 h-3"><path d="M.5.5h15v11H.5zM.5 4.500h15M.5 8.500h15M5.500 0v12M10.500 0v12" fill="#fff" stroke="#555" /></svg>
          </button>
          <button type="button" aria-label="Page layout view" className="ml-[3px]">
            <svg viewBox="0 0 16 14" className="w-4 h-[14px]"><path d="M0 0h16v14H0z" fill="#a9adb8" /><path d="M3.500 2.500h9V14h-9z" fill="#fff" stroke="#666" /><path d="M6 5h5M6 8h5" stroke="#777" /></svg>
          </button>
          <button type="button" aria-label="Page break view" className="ml-2">
            <svg viewBox="0 0 16 14" className="w-4 h-[14px]"><path d="M0 0h16v14H0z" fill="#a9adb8" /><path d="M1 1h4v7H1zM7 1h4v7H7z" fill="#fff" /></svg>
          </button>
          <span className="ml-[13px] w-10">100%</span>
          <button type="button" aria-label="Zoom out" className="size-[19px] rounded-full bg-[#b5b5b5] border border-[#222] flex items-center justify-center">
            <span className="w-[9px] h-[2px] bg-[#333]" />
          </button>
          <input type="range" aria-label="Zoom" className="w-[126px] h-4 appearance-none bg-linear-to-b from-transparent from-45% via-[#999] via-50% to-transparent to-55% [&::-webkit-slider-thumb]:appearance-none [&::-webkit-slider-thumb]:w-[9px] [&::-webkit-slider-thumb]:h-4 [&::-webkit-slider-thumb]:bg-[#c4c4c4] [&::-webkit-slider-thumb]:border [&::-webkit-slider-thumb]:border-[#222]" />
          <button type="button" aria-label="Zoom in" className="size-[19px] mr-1 rounded-full bg-[#b5b5b5] border border-[#222] relative flex items-center justify-center">
            <span className="w-[9px] h-[2px] bg-[#333]" />
            <span className="absolute w-[2px] h-[9px] bg-[#333]" />
          </button>
        </div>
      </div>
    </footer>
  );
}

export default function App() {
  return (
    <div className="h-screen overflow-hidden flex flex-col bg-black pl-[6px] font-['Open_Sans',sans-serif]">
      <header className="relative shrink-0">
        <Wallpaper />
        <TitleBar />
        <RibbonTabs />
      </header>
      <div className="shrink-0 bg-[#a1a1a1]">
        <Ribbon />
        <FormulaBar />
        <WorkbookTab />
      </div>
      <Sheet />
      <SheetTabs />
      <StatusBar />
    </div>
  );
}
